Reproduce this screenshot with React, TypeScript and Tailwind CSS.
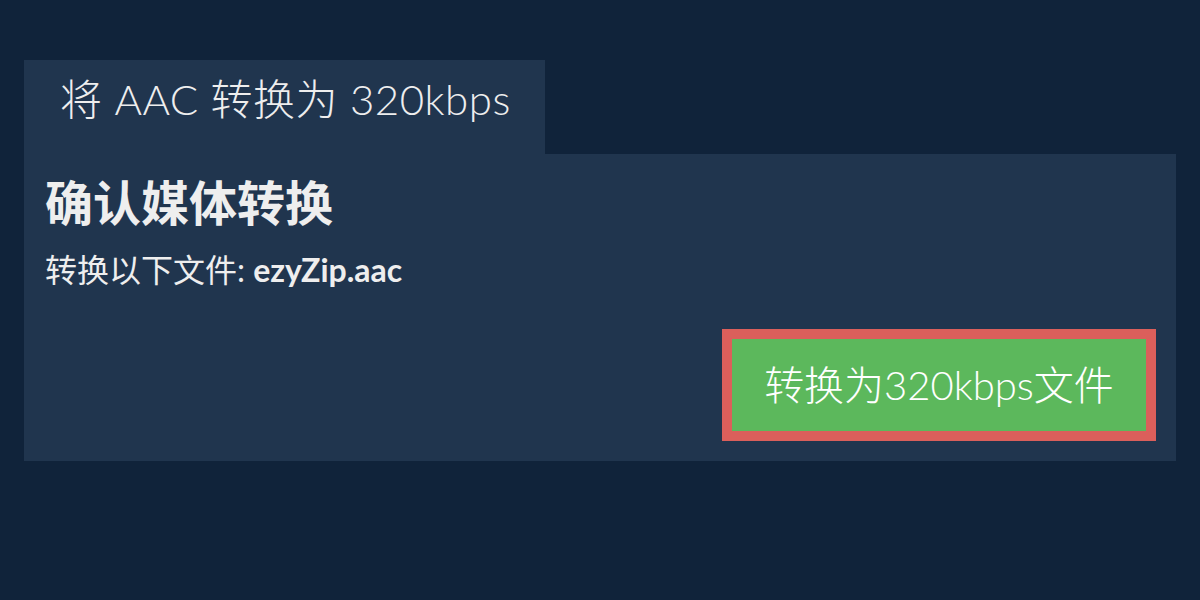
export default function App() {
    return (
        <div className="w-[1200px] h-[600px] bg-[#10233a] pt-[60px] px-[24px] font-['Lato','Noto_Sans_CJK_SC',sans-serif] text-[#eeeeee]">
            <div className="w-[521px] h-[94px] bg-[#20354e] pl-[36px] pt-[14px]">
                <span className="text-[42px] leading-[50px] font-light tracking-[0.5px]">将 AAC 转换为 320kbps</span>
            </div>
            <div className="bg-[#20354e] flex flex-col pt-[20px] pb-[20px] pl-[21px] pr-[20px]">
                <h1 className="text-[48px] leading-[58px] font-bold">确认媒体转换</h1>
                <p className="mt-[14px] text-[32px] leading-[48px] font-normal">
                    转换以下文件: <strong className="font-bold">ezyZip.aac</strong>
                </p>
                <div className="self-end mt-[35px]">
                    <button className="w-[434px] h-[112px] border-[10px] border-[#db5f5b] bg-[#5cb85c] flex items-center justify-center text-[40px] font-light text-white">
                        转换为320kbps文件
                    </button>
                </div>
            </div>
        </div>
    )
}
